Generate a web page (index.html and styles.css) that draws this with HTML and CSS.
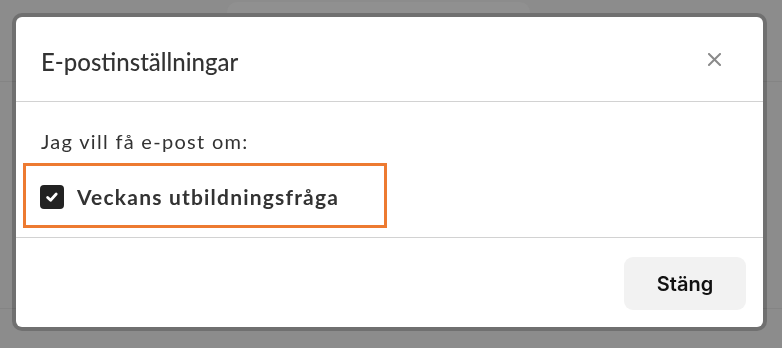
FILE: index.html
```html
<!DOCTYPE html>
<html lang="sv">
<head>
<meta charset="utf-8">
<title>E-postinställningar</title>
<link rel="stylesheet" href="styles.css">
</head>
<body>
<div class="page">
  <div class="tab"></div>
  <div class="row row-top"></div>
  <div class="row row-mid"></div>
</div>
<div class="modal" role="dialog">
  <div class="modal-header">
    <h2 class="modal-title">E-postinställningar</h2>
    <button class="close" aria-label="Stäng">
      <svg width="13" height="13" viewBox="0 0 13 13"><path d="M1 1L12 12M12 1L1 12" stroke="#8a8a8a" stroke-width="2" stroke-linecap="square" fill="none"/></svg>
    </button>
  </div>
  <div class="modal-body">
    <p class="intro">Jag vill få e-post om:</p>
    <label class="option">
      <span class="checkbox">
        <svg width="14" height="14" viewBox="0 0 14 14"><path d="M2.6 7.4L5.6 10.2L11.2 4" stroke="#fff" stroke-width="2.8" stroke-linecap="round" stroke-linejoin="round" fill="none"/></svg>
      </span>
      <span class="option-label">Veckans utbildningsfråga</span>
    </label>
  </div>
  <div class="modal-footer">
    <button class="btn">Stäng</button>
  </div>
</div>
</body>
</html>
```
FILE: styles.css
```css
html, body {
  margin: 0;
  padding: 0;
}
body {
  background: #8c8c8c;
  width: 782px;
  height: 348px;
  overflow: hidden;
  font-family: "Lato", "Liberation Sans", sans-serif;
}
.page {
  padding-top: 2px;
}
.tab {
  margin-left: 227px;
  width: 303px;
  height: 11px;
  background: #909090;
  border-radius: 10px 10px 0 0;
}
.row {
  border-bottom: 1px solid #848484;
}
.row-top {
  height: 68px;
}
.row-mid {
  height: 226px;
}
.modal {
  position: fixed;
  top: 17px;
  left: 16px;
  width: 747px;
  height: 310px;
  background: #fff;
  border-radius: 6px;
  box-shadow: 0 0 0 4px rgba(0, 0, 0, 0.2);
  display: flex;
  flex-direction: column;
  color: #333;
}
.modal-header {
  height: 85px;
  box-sizing: border-box;
  border-bottom: 1px solid #d2d2d2;
  display: flex;
  align-items: center;
  justify-content: space-between;
  padding: 0 42px 0 25px;
}
.modal-title {
  margin: 0;
  font-size: 24px;
  font-weight: 500;
  color: #333;
  padding-top: 4px;
}
.close {
  border: 0;
  background: none;
  padding: 0;
  width: 13px;
  height: 13px;
  display: flex;
  cursor: pointer;
}
.modal-body {
  height: 136px;
  box-sizing: border-box;
  border-bottom: 1px solid #d2d2d2;
  padding-top: 29px;
}
.intro {
  margin: 0 0 11px 25px;
  font-size: 20px;
  line-height: 21px;
  letter-spacing: 1.3px;
  color: #333;
}
.option {
  margin-left: 7px;
  width: 364px;
  height: 65px;
  box-sizing: border-box;
  border: 3px solid #ed7a31;
  display: flex;
  align-items: center;
  gap: 13px;
  padding-left: 14px;
  padding-top: 2px;
}
.checkbox {
  width: 24px;
  height: 24px;
  border-radius: 4px;
  background: #222;
  display: flex;
  align-items: center;
  justify-content: center;
}
.option-label {
  font-size: 21px;
  font-weight: 700;
  letter-spacing: 1.2px;
  color: #333;
}
.modal-footer {
  flex: 1;
  display: flex;
  align-items: center;
  justify-content: flex-end;
  padding-right: 17px;
}
.btn {
  width: 122px;
  height: 53px;
  border: 0;
  border-radius: 9px;
  background: #f2f2f2;
  font-family: "Inter", "Liberation Sans", sans-serif;
  font-size: 20px;
  font-weight: 600;
  color: #111;
  margin-top: 2px;
}
```
